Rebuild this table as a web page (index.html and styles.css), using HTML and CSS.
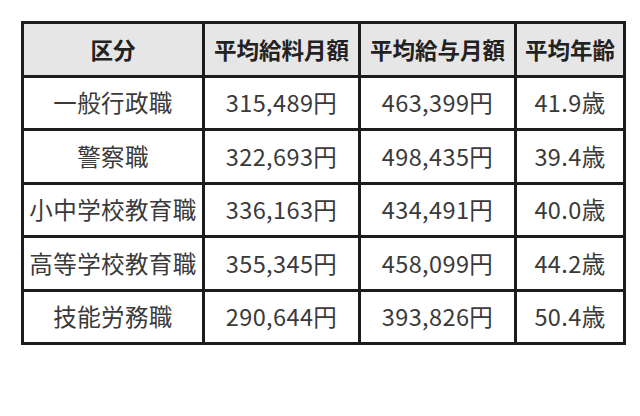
FILE: index.html
```html
<!DOCTYPE html>
<html lang="ja">
<head>
<meta charset="utf-8">
<link rel="stylesheet" href="styles.css">
</head>
<body>
<table class="salary">
  <colgroup>
    <col class="c1"><col class="c2"><col class="c3"><col class="c4">
  </colgroup>
  <thead>
    <tr><th>区分</th><th>平均給料月額</th><th>平均給与月額</th><th>平均年齢</th></tr>
  </thead>
  <tbody>
    <tr><td>一般行政職</td><td>315,489円</td><td>463,399円</td><td>41.9歳</td></tr>
    <tr><td>警察職</td><td>322,693円</td><td>498,435円</td><td>39.4歳</td></tr>
    <tr><td>小中学校教育職</td><td>336,163円</td><td>434,491円</td><td>40.0歳</td></tr>
    <tr><td>高等学校教育職</td><td>355,345円</td><td>458,099円</td><td>44.2歳</td></tr>
    <tr><td>技能労務職</td><td>290,644円</td><td>393,826円</td><td>50.4歳</td></tr>
  </tbody>
</table>
</body>
</html>
```
FILE: styles.css
```css
html, body {
  margin: 0;
  padding: 0;
  background: #ffffff;
}
body {
  width: 640px;
  height: 416px;
  overflow: hidden;
  font-family: "Noto Sans CJK JP", "Noto Sans", sans-serif;
}
.salary {
  margin: 21px 0 0 21px;
  border-collapse: collapse;
  table-layout: fixed;
  width: 602px;
}
.c1 { width: 181px; }
.c2 { width: 156px; }
.c3 { width: 156px; }
.c4 { width: 109px; }
.salary th,
.salary td {
  border: 3px solid #1c1c1c;
  height: 50.5px;
  padding: 0;
  text-align: center;
  vertical-align: middle;
  white-space: nowrap;
  line-height: 1;
}
.salary th {
  background: #e6e6e6;
  color: #222222;
  font-weight: bold;
  font-size: 22.5px;
}
.salary td {
  color: #3a3a3a;
  font-size: 23.5px;
  font-weight: normal;
  letter-spacing: 0.4px;
}
```
